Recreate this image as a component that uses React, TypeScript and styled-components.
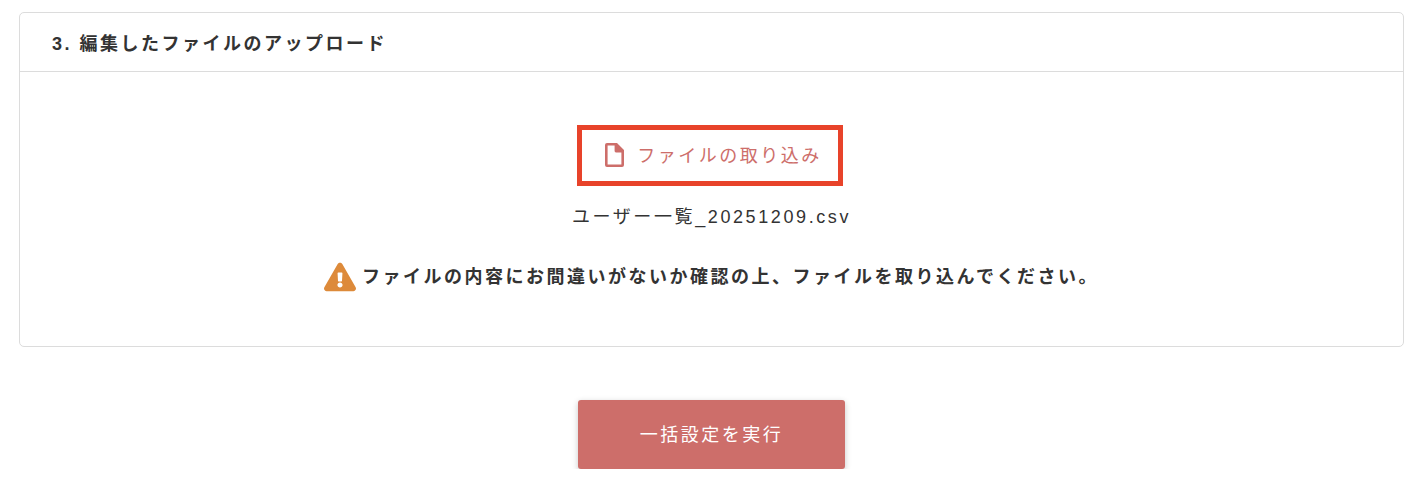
import React from "react";
import styled, { createGlobalStyle } from "styled-components";
import { FaExclamationTriangle } from "react-icons/fa";

const GlobalStyle = createGlobalStyle`
  html, body {
    margin: 0;
    background: #fff;
    font-family: "Liberation Sans", "Noto Sans CJK JP", sans-serif;
    color: #333;
  }
`;

const Page = styled.div`
  padding: 12px 18px 0 19px;
`;

const Card = styled.section`
  border: 1px solid #dcdcdc;
  border-radius: 5px;
  height: 335px;
  box-sizing: border-box;
`;

const CardHeader = styled.h2`
  margin: 0;
  height: 59px;
  box-sizing: border-box;
  border-bottom: 1px solid #dcdcdc;
  padding: 0 0 1px 32px;
  display: flex;
  align-items: center;
  font-size: 18px;
  font-weight: 700;
  letter-spacing: 2.5px;
`;

const CardBody = styled.div`
  display: flex;
  flex-direction: column;
  align-items: center;
  padding-top: 53px;
`;

const ImportButton = styled.button`
  width: 266px;
  height: 61px;
  margin-right: 3px;
  box-sizing: border-box;
  border: 5px solid #e8432a;
  background: #fff;
  color: #cd6e6a;
  font: inherit;
  font-size: 18px;
  letter-spacing: 2.5px;
  display: flex;
  align-items: center;
  justify-content: center;
  gap: 13px;
  padding: 0 0 4px 7px;
`;

const FileIcon = styled.svg`
  width: 19px;
  height: 24px;
  margin-top: 3px;
  fill: currentColor;
`;

const FileName = styled.p`
  margin: 18px 0 0;
  height: 26px;
  line-height: 26px;
  font-size: 18px;
  letter-spacing: 2.6px;
`;

const Notice = styled.p`
  margin: 31px 0 0;
  display: flex;
  align-items: center;
  gap: 6px;
  font-size: 18px;
  font-weight: 700;
  letter-spacing: 2.5px;
  line-height: 32px;

  svg {
    font-size: 32px;
    color: #dd8a3a;
  }
`;

const Actions = styled.div`
  display: flex;
  justify-content: center;
  padding-top: 53px;
`;

const SubmitButton = styled.button`
  width: 267px;
  height: 69px;
  border: 0;
  border-radius: 3px;
  padding: 0 0 3px;
  background: #cd6e6a;
  color: #fff;
  font: inherit;
  font-size: 18px;
  letter-spacing: 2.5px;
  box-shadow: 0 2px 6px rgba(0, 0, 0, 0.22);
`;

export default function App() {
  return (
    <Page>
      <GlobalStyle />
      <Card>
        <CardHeader>3. 編集したファイルのアップロード</CardHeader>
        <CardBody>
          <ImportButton>
            <FileIcon viewBox="0 0 19 24">
              <path
                fillRule="evenodd"
                d="M2 0h10l7 7v15a2 2 0 0 1-2 2H2a2 2 0 0 1-2-2V2a2 2 0 0 1 2-2zM2.6 2.6v18.8h13.8V9.5H11a1.4 1.4 0 0 1-1.4-1.4V2.6z"
              />
            </FileIcon>
            ファイルの取り込み
          </ImportButton>
          <FileName>ユーザー一覧_20251209.csv</FileName>
          <Notice>
            <FaExclamationTriangle />
            ファイルの内容にお間違いがないか確認の上、ファイルを取り込んでください。
          </Notice>
        </CardBody>
      </Card>
      <Actions>
        <SubmitButton>一括設定を実行</SubmitButton>
      </Actions>
    </Page>
  );
}
